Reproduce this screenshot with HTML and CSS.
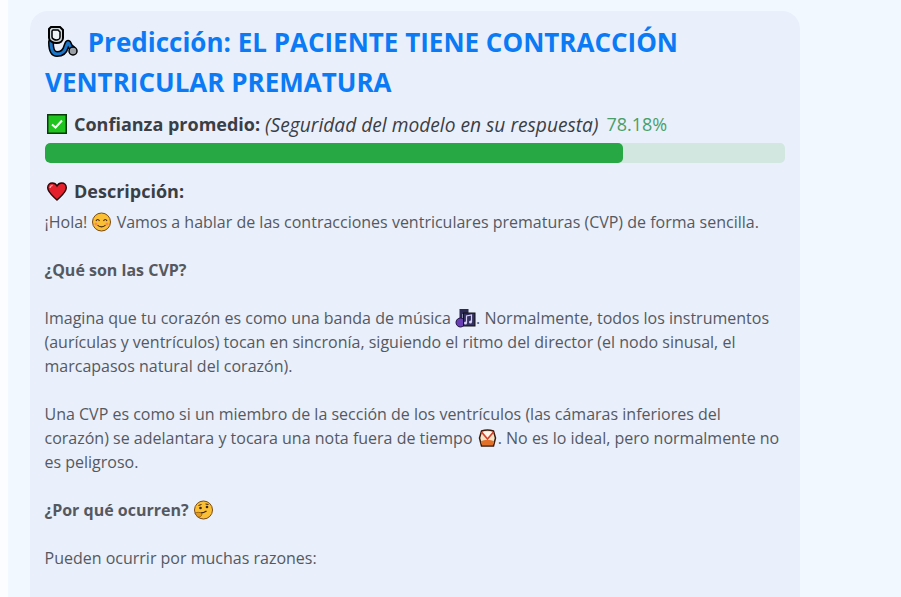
FILE: index.html
```html
<!DOCTYPE html>
<html lang="es">
<head>
<meta charset="utf-8">
<title>Predicción</title>
<link rel="stylesheet" href="styles.css">
</head>
<body>
<main class="page">
  <section class="card">
    <h1 class="title">
      <svg class="emoji-title" viewBox="0 0 32 32"><path d="M5 17c0 7 1 12 6 12 6 0 8-3 9-7 1-3 2-6 3-3 .5 2 1.500 3 3 4" fill="none" stroke="#000" stroke-width="6" stroke-linecap="round"/><path d="M5 17c0 7 1 12 6 12 6 0 8-3 9-7 1-3 2-6 3-3 .5 2 1.500 3 3 4" fill="none" stroke="#1976c8" stroke-width="3" stroke-linecap="round"/><path d="M5 2h9l3 3v8c0 3-3 5-6.500 5S3 16 3 13V4z" fill="#cfd8dc" stroke="#000" stroke-width="2"/><path d="M7 5h5l2 2v5c0 2-2 3-3.500 3S6 14 6 12V6z" fill="#eef3f6" stroke="#000" stroke-width="1.500"/><circle cx="27" cy="26" r="4" fill="#9aa0a6" stroke="#000" stroke-width="1.500"/></svg>
      <span class="title-text">Predicción: EL PACIENTE TIENE CONTRACCIÓN VENTRICULAR PREMATURA</span>
    </h1>
    <div class="confidence">
      <svg class="emoji" viewBox="0 0 20 20"><rect x=".75" y=".75" width="18.500" height="18.500" fill="#1fc41f" stroke="#0a3a0a" stroke-width="1.500"/><path d="M5 10.500l3.500 3 6.500-7" fill="none" stroke="#fff" stroke-width="2"/></svg>
      <strong>Confianza promedio:</strong>
      <em>(Seguridad del modelo en su respuesta)</em>
      <span class="pct">78.18%</span>
    </div>
    <div class="track"><div class="fill" style="width:78.1%"></div></div>
    <h2 class="desc-head">
      <svg class="emoji" viewBox="0 0 20 20"><path d="M10 19C6 15 .7 11.500.7 6.800.7 3.800 2.800 2 5.300 2 7.300 2 9 3 10 5c1-2 2.700-3 4.700-3 2.500 0 4.600 1.800 4.600 4.800C19.300 11.500 14 15 10 19z" fill="#e4202c" stroke="#2a0608" stroke-width="1.400"/><path d="M3 7C3.300 5.300 4.300 4.500 5.700 4.400" fill="none" stroke="#ff9aa2" stroke-width="1.400"/></svg>
      <span>Descripción:</span>
    </h2>
    <div class="desc">
      <p>¡Hola! <svg class="inline" viewBox="0 0 20 20"><circle cx="10" cy="10" r="9" fill="#fbbf35" stroke="#7a4a10"/><path d="M4.500 9c1-2 2.500-2 3.500 0M12 9c1-2 2.500-2 3.500 0" fill="none" stroke="#4a2c10" stroke-width="1.200"/><path d="M6 13c2 2.500 6 2.500 8 0" fill="none" stroke="#4a2c10" stroke-width="1.200"/><circle cx="4.500" cy="12" r="1.500" fill="#f58a5a"/><circle cx="15.500" cy="12" r="1.500" fill="#f58a5a"/></svg> Vamos a hablar de las contracciones ventriculares prematuras (CVP) de forma sencilla.</p>
      <p><strong>¿Qué son las CVP?</strong></p>
      <p>Imagina que tu corazón es como una banda de música <svg class="inline" viewBox="0 0 20 20"><path d="M4 1h9v5H7v9H4z" fill="#2c2a55"/><ellipse cx="5" cy="14.500" rx="4.500" ry="4.500" fill="#6a3fb5" stroke="#1d1440"/><rect x="8" y="5" width="11.500" height="13" fill="#34305f" stroke="#111"/><path d="M11 15V8l5-1v7" fill="none" stroke="#d9d0f5" stroke-width="1.200"/><circle cx="10" cy="15" r="1.500" fill="#d9d0f5"/><circle cx="15" cy="14" r="1.500" fill="#d9d0f5"/></svg>. Normalmente, todos los instrumentos (aurículas y ventrículos) tocan en sincronía, siguiendo el ritmo del director (el nodo sinusal, el marcapasos natural del corazón).</p>
      <p>Una CVP es como si un miembro de la sección de los ventrículos (las cámaras inferiores del corazón) se adelantara y tocara una nota fuera de tiempo <svg class="inline" viewBox="0 0 20 20"><path d="M4 3q6-2 12 0l2 7-2 8H4l-2-8z" fill="#f5e3c4" stroke="#3a1a0a" stroke-width="1.500"/><path d="M4 4l6 7 6-7" fill="#fff7ea" stroke="#d8402a" stroke-width="1.700"/><path d="M3.500 13c3-1.500 10-1.500 13 0l-1 4h-11z" fill="#e0702a"/></svg>. No es lo ideal, pero normalmente no es peligroso.</p>
      <p><strong>¿Por qué ocurren? <svg class="inline" viewBox="0 0 20 20"><circle cx="10" cy="10" r="9" fill="#fbbf35" stroke="#7a4a10"/><circle cx="7" cy="8" r="1.300" fill="#3a2410"/><circle cx="13.500" cy="7" r="1.300" fill="#3a2410"/><path d="M5 5.500l3-1M12 4l3 .5" stroke="#3a2410" stroke-width="1"/><path d="M7 13c2 0 4-.5 6-2" fill="none" stroke="#3a2410" stroke-width="1.300"/><path d="M1.500 13c2-1 5-1 7 .5 0 2-2 5-5 3z" fill="#e39a1f" stroke="#7a4a10" stroke-width=".7"/></svg></strong></p>
      <p>Pueden ocurrir por muchas razones:</p>
    </div>
  </section>
</main>
</body>
</html>
```

FILE: styles.css
```css
* { box-sizing: border-box; }
html, body { height: 100%; }
body {
  margin: 0;
  overflow: hidden;
  background: #fcfdfe;
  font-family: "Open Sans", sans-serif;
  color: #55595f;
  padding-left: 8px;
}
.page {
  height: 100%;
  overflow: hidden;
  background: #f2f8ff;
  padding: 11px 0 0 22px;
}
.card {
  width: 770px;
  min-height: 640px;
  background: #e9effb;
  border-radius: 18px 18px 0 0;
  padding: 11px 15px 0 15px;
}
.title {
  margin: 0 0 9px;
  font-size: 26px;
  line-height: 40px;
  font-weight: 700;
  color: #0a7bf5;
}
.emoji-title {
  width: 32px;
  height: 32px;
  vertical-align: -5px;
  margin-left: 1px;
  margin-right: 3px;
}
.confidence {
  display: flex;
  align-items: center;
  height: 26px;
  font-size: 18px;
  color: #3a3e45;
  white-space: pre;
}
.confidence strong { font-weight: 700; margin-left: 7px; margin-right: 5px; }
.confidence em { font-style: italic; font-size: 19.200px; }
.pct { color: #4a9f68; margin-left: 8px; }
.emoji { width: 20px; height: 20px; flex: none; margin-left: 2px; }
.track {
  height: 20px;
  margin-top: 6px;
  background: #d2e7df;
  border-radius: 5px;
  overflow: hidden;
}
.fill { height: 100%; background: #28a745; border-radius: 5px; }
.desc-head {
  margin: 15px 0 0;
  display: flex;
  align-items: center;
  height: 26px;
  font-size: 18px;
  font-weight: 700;
  color: #3a3e45;
}
.desc-head span { margin-left: 7px; }
.desc { margin: 6px 0 0 -0.5px; font-size: 16px; line-height: 24px; }
.desc p { margin: 0 0 24px; }
.inline { width: 21px; height: 20px; vertical-align: -4px; }
```
